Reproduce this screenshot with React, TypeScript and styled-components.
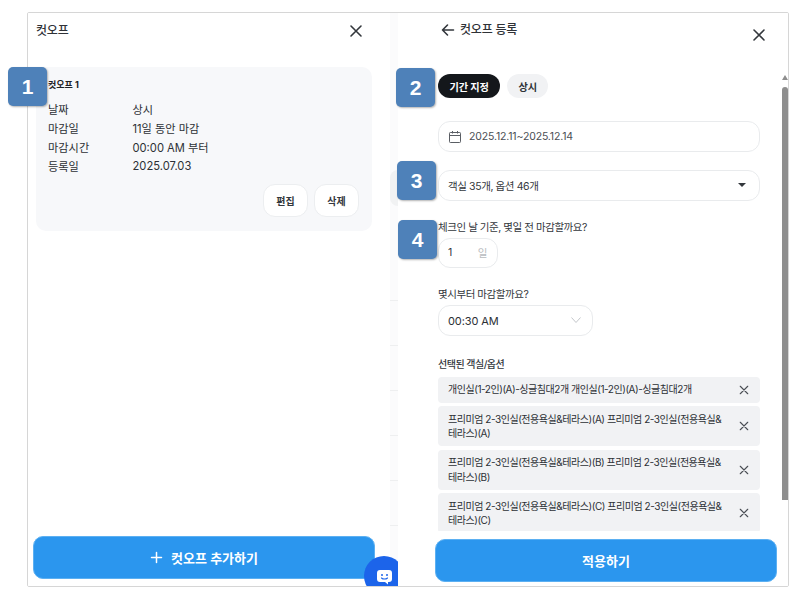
import React from "react";
import styled, { createGlobalStyle } from "styled-components";

const Global = createGlobalStyle`
  html, body { margin: 0; padding: 0; background: #fff; }
  body { font-family: Inter, "Noto Sans CJK KR", "Noto Sans", sans-serif; color: #33373c; }
  * { box-sizing: border-box; }
`;

const Stage = styled.div`
  position: relative;
  margin: 12px 0 0 27px;
  width: 762px;
  height: 575px;
`;

const Frame = styled.div`
  position: relative;
  width: 100%;
  height: 100%;
  border: 1px solid #d6d6d6;
  border-radius: 2px;
  display: flex;
  overflow: hidden;
`;

const LeftPanel = styled.section`
  width: 362px;
  display: flex;
  flex-direction: column;
  padding: 0 15px 7px 8px;
  background: #fff;
`;

const LeftHeader = styled.header`
  display: flex;
  align-items: center;
  justify-content: space-between;
  height: 36px;
  margin-bottom: 18px;
  padding-right: 11px;
`;

const PanelTitle = styled.h2`
  margin: 0;
  font-size: 12px;
  font-weight: 500;
  color: #2f3237;
  line-height: 16px;
  letter-spacing: -0.2px;
`;

const CloseBtn = styled.span`
  display: flex;
  width: 16px;
  height: 16px;
  color: #33373c;
`;

const Card = styled.article`
  width: 336px;
  height: 164px;
  background: #f7f8fa;
  border-radius: 10px;
  padding: 12px;
  display: flex;
  flex-direction: column;
`;

const CardTitle = styled.h3`
  margin: 0 0 8px;
  font-size: 9px;
  line-height: 12px;
  font-weight: 700;
  color: #1e2125;
`;

const InfoRow = styled.div`
  display: grid;
  grid-template-columns: 84.5px 1fr;
  height: 19.2px;
  align-items: center;
  font-size: 11.2px;
  color: #2c3035;
`;

const CardActions = styled.div`
  display: flex;
  justify-content: flex-end;
  gap: 6px;
  margin-top: auto;
  margin-right: 1px;
  margin-bottom: 2px;
`;

const GhostBtn = styled.button`
  width: 45px;
  height: 33px;
  background: #fff;
  border: 1px solid #eceef0;
  border-radius: 12px;
  font: 600 10px Inter, "Noto Sans CJK KR", sans-serif;
  color: #33373c;
  padding: 0;
`;

const PrimaryBtn = styled.button<{ $w: number; $h: number }>`
  display: flex;
  align-items: center;
  justify-content: center;
  gap: 8px;
  width: ${(p) => p.$w}px;
  height: ${(p) => p.$h}px;
  border: 1px solid #5cb0f2;
  border-radius: 10px;
  background: #2b96ee;
  color: #fff;
  font: 600 13px Inter, "Noto Sans CJK KR", sans-serif;
  padding: 0;
`;

const AddBtn = styled(PrimaryBtn)`
  margin: auto 0 0 -3px;
`;

const Gutter = styled.div`
  width: 8px;
  background: #fbfbfc;
  display: flex;
  flex-direction: column;
  padding-top: 157px;
`;

const GutterTab = styled.div`
  width: 8px;
  height: 36px;
  background: #f1f2f3;
  border-radius: 8px 0 0 8px;
  margin-bottom: 50px;
`;

const GutterLine = styled.div`
  flex: none;
  height: 45px;
  border-bottom: 1px solid #eeeff0;
`;

const RightPanel = styled.section`
  position: relative;
  z-index: 2;
  flex: 1;
  background: #fff;
  display: flex;
  flex-direction: column;
  padding-left: 40px;
`;

const RightHeader = styled.header`
  display: flex;
  height: 60px;
  padding-top: 8px;
  padding-right: 21px;
  justify-content: space-between;
`;

const BackGroup = styled.div`
  display: flex;
  align-items: center;
  gap: 5px;
  height: 18px;
  margin-left: 3px;
`;

const RightClose = styled(CloseBtn)`
  margin-top: 6px;
`;

const Scroll = styled.div`
  height: 458px;
  overflow: hidden;
  padding-right: 28px;
  display: flex;
  flex-direction: column;
`;

const Tabs = styled.div`
  display: flex;
  gap: 7px;
  margin-top: 1px;
  margin-bottom: 23px;
`;

const Tab = styled.span<{ $active?: boolean }>`
  display: flex;
  align-items: center;
  justify-content: center;
  height: 24px;
  padding: 0 11.500px;
  border-radius: 13px;
  background: ${(p) => (p.$active ? "#14171b" : "#f1f2f4")};
  color: ${(p) => (p.$active ? "#fff" : "#2f3337")};
  font-size: 10.2px;
  font-weight: 600;
  letter-spacing: -0.2px;
`;

const Field = styled.div<{ $w?: number; $h?: number; $mb?: number }>`
  display: flex;
  align-items: center;
  justify-content: space-between;
  flex: none;
  width: ${(p) => (p.$w ? `${p.$w}px` : "100%")};
  height: ${(p) => p.$h ?? 31}px;
  margin-bottom: ${(p) => p.$mb ?? 0}px;
  padding: 0 10px 0 9px;
  background: #fff;
  border: 1px solid #e9ebed;
  border-radius: 12px;
  font-size: 10.5px;
  letter-spacing: -0.4px;
  color: #33373c;
`;

const DateValue = styled.span`
  display: flex;
  align-items: center;
  gap: 7px;
  color: #4a4e54;
  letter-spacing: -0.15px;
`;

const CaretDown = styled.span`
  width: 0;
  height: 0;
  margin-right: 3px;
  border-left: 4px solid transparent;
  border-right: 4px solid transparent;
  border-top: 4px solid #33373c;
`;

const Question = styled.label`
  display: block;
  font-size: 10.5px;
  line-height: 14px;
  letter-spacing: -0.45px;
  color: #33373c;
  margin-bottom: 3px;
`;

const Unit = styled.span`
  color: #b9bcc0;
`;

const TimeValue = styled.span`
  font-size: 11px;
  line-height: 16px;
  padding-top: 1px;
  letter-spacing: -0.1px;
  color: #2c3035;
`;

const SectionLabel = styled.div`
  font-size: 10px;
  font-weight: 500;
  line-height: 14px;
  letter-spacing: -0.5px;
  color: #33373c;
  margin-top: 21px;
  margin-bottom: 6px;
`;

const ChipList = styled.div`
  display: flex;
  flex-direction: column;
  gap: 3.5px;
`;

const Chip = styled.div`
  display: flex;
  align-items: center;
  justify-content: space-between;
  flex: none;
  gap: 14px;
  min-height: 26px;
  padding: 5.500px 10px 5.500px 10px;
  border-radius: 4px;
  background: #f1f2f4;
  font-size: 10px;
  line-height: 14.5px;
  letter-spacing: -0.46px;
  color: #2c3035;
`;

const ChipX = styled.span`
  flex: none;
  display: flex;
  width: 12px;
  height: 12px;
  color: #4a4e54;
`;

const ScrollThumb = styled.div`
  position: absolute;
  right: 0;
  top: 74px;
  width: 6px;
  height: 413px;
  background: #8e8e8e;
  border-radius: 3px 3px 0 0;
`;

const ScrollArrow = styled.div`
  position: absolute;
  right: 0;
  top: 62px;
  width: 0;
  height: 0;
  border-left: 3px solid transparent;
  border-right: 3px solid transparent;
  border-bottom: 5px solid #8e8e8e;
`;

const Footer = styled.div`
  padding: 8px 0 0;
  margin-left: -3px;
`;

const Badge = styled.div<{ $x: number; $y: number }>`
  position: absolute;
  z-index: 5;
  left: ${(p) => p.$x}px;
  top: ${(p) => p.$y}px;
  width: 39px;
  height: 39px;
  display: flex;
  align-items: center;
  justify-content: center;
  background: #4e81b9;
  border-radius: 5px;
  box-shadow: 1px 1px 2px rgba(0, 0, 0, 0.3);
  color: #fff;
  font: 700 21px "Liberation Sans", Arial, sans-serif;
`;

const ChatBubble = styled.div`
  position: absolute;
  z-index: 1;
  left: 336px;
  top: 543px;
  width: 40px;
  height: 40px;
  border-radius: 50%;
  background: #1c64ea;
  display: flex;
  align-items: center;
  justify-content: center;
`;

const X = ({ w = 1.6 }: { w?: number }) => (
  <svg viewBox="0 0 16 16" width="100%" height="100%" fill="none" stroke="currentColor" strokeWidth={w} strokeLinecap="round">
    <path d="M3 3l10 10M13 3L3 13" />
  </svg>
);

const rows = [
  ["날짜", "상시"],
  ["마감일", "11일 동안 마감"],
  ["마감시간", "00:00 AM 부터"],
  ["등록일", "2025.07.03"],
];

const chips = [
  "개인실(1-2인)(A)-싱글침대2개 개인실(1-2인)(A)-싱글침대2개",
  "프리미엄 2-3인실(전용욕실&테라스)(A) 프리미엄 2-3인실(전용욕실&테라스)(A)",
  "프리미엄 2-3인실(전용욕실&테라스)(B) 프리미엄 2-3인실(전용욕실&테라스)(B)",
  "프리미엄 2-3인실(전용욕실&테라스)(C) 프리미엄 2-3인실(전용욕실&테라스)(C)",
];

export default function App() {
  return (
    <>
      <Global />
      <Stage>
        <Frame>
          <LeftPanel>
            <LeftHeader>
              <PanelTitle>컷오프</PanelTitle>
              <CloseBtn><X /></CloseBtn>
            </LeftHeader>
            <Card>
              <CardTitle>컷오프 1</CardTitle>
              {rows.map(([k, v]) => (
                <InfoRow key={k}>
                  <span>{k}</span>
                  <span>{v}</span>
                </InfoRow>
              ))}
              <CardActions>
                <GhostBtn>편집</GhostBtn>
                <GhostBtn>삭제</GhostBtn>
              </CardActions>
            </Card>
            <AddBtn $w={342} $h={43}>
              <svg width="13" height="13" viewBox="0 0 13 13" stroke="#fff" strokeWidth="1.5" strokeLinecap="round">
                <path d="M6.500 1.500v10M1.500 6.500h10" />
              </svg>
              컷오프 추가하기
            </AddBtn>
          </LeftPanel>
          <Gutter>
            <GutterTab />
            <GutterLine />
            <GutterLine />
            <GutterLine />
            <GutterLine />
            <GutterLine />
            <GutterLine />
          </Gutter>
          <ChatBubble>
            <svg width="17" height="17" viewBox="0 0 17 17">
              <path d="M4 2h9a3 3 0 0 1 3 3v6a3 3 0 0 1-3 3h-1v2.600L9 14H4a3 3 0 0 1-3-3V5a3 3 0 0 1 3-3z" fill="#fff" />
              <circle cx="6" cy="7" r="1" fill="#1c64ea" />
              <circle cx="11" cy="7" r="1" fill="#1c64ea" />
              <path d="M5.500 10c1.500 1.400 4.500 1.400 6 0" stroke="#1c64ea" strokeWidth="1.1" fill="none" strokeLinecap="round" />
            </svg>
          </ChatBubble>
          <RightPanel>
            <RightHeader>
              <BackGroup>
                <svg width="14" height="14" viewBox="0 0 14 14" fill="none" stroke="#33373c" strokeWidth="1.6" strokeLinecap="round" strokeLinejoin="round">
                  <path d="M12.500 7h-11M6.500 2l-5 5 5 5" />
                </svg>
                <PanelTitle>컷오프 등록</PanelTitle>
              </BackGroup>
              <RightClose><X /></RightClose>
            </RightHeader>
            <Scroll>
              <Tabs>
                <Tab $active>기간 지정</Tab>
                <Tab>상시</Tab>
              </Tabs>
              <Field $mb={18}>
                <DateValue>
                  <svg width="14" height="14" viewBox="0 0 14 14" fill="none" stroke="#5a5e64" strokeWidth="1">
                    <rect x="1.500" y="2.500" width="11" height="10" rx="0.8" />
                    <path d="M1.500 5.500h11M4.500 1v2.500M9.500 1v2.500" />
                  </svg>
                  2025.12.11~2025.12.14
                </DateValue>
              </Field>
              <Field $h={30.5} $mb={20}>
                <span>객실 35개, 옵션 46개</span>
                <CaretDown />
              </Field>
              <Question>체크인 날 기준, 몇일 전 마감할까요?</Question>
              <Field $w={60} $h={30} $mb={20}>
                <span>1</span>
                <Unit>일</Unit>
              </Field>
              <Question>몇시부터 마감할까요?</Question>
              <Field $w={155}>
                <TimeValue>00:30 AM</TimeValue>
                <svg width="12" height="8" viewBox="0 0 12 8" fill="none" stroke="#c4c7cb" strokeWidth="1">
                  <path d="M1.500 1.500L6 6.500l4.500-5" />
                </svg>
              </Field>
              <SectionLabel>선택된 객실/옵션</SectionLabel>
              <ChipList>
                {chips.map((c) => (
                  <Chip key={c}>
                    <span>{c}</span>
                    <ChipX><X w={1.5} /></ChipX>
                  </Chip>
                ))}
              </ChipList>
            </Scroll>
            <Footer>
              <PrimaryBtn $w={342} $h={43}>적용하기</PrimaryBtn>
            </Footer>
            <ScrollArrow />
            <ScrollThumb />
          </RightPanel>
        </Frame>
        <Badge $x={-19} $y={55}>1</Badge>
        <Badge $x={369} $y={56}>2</Badge>
        <Badge $x={370} $y={149}>3</Badge>
        <Badge $x={371} $y={208}>4</Badge>
      </Stage>
    </>
  );
}
